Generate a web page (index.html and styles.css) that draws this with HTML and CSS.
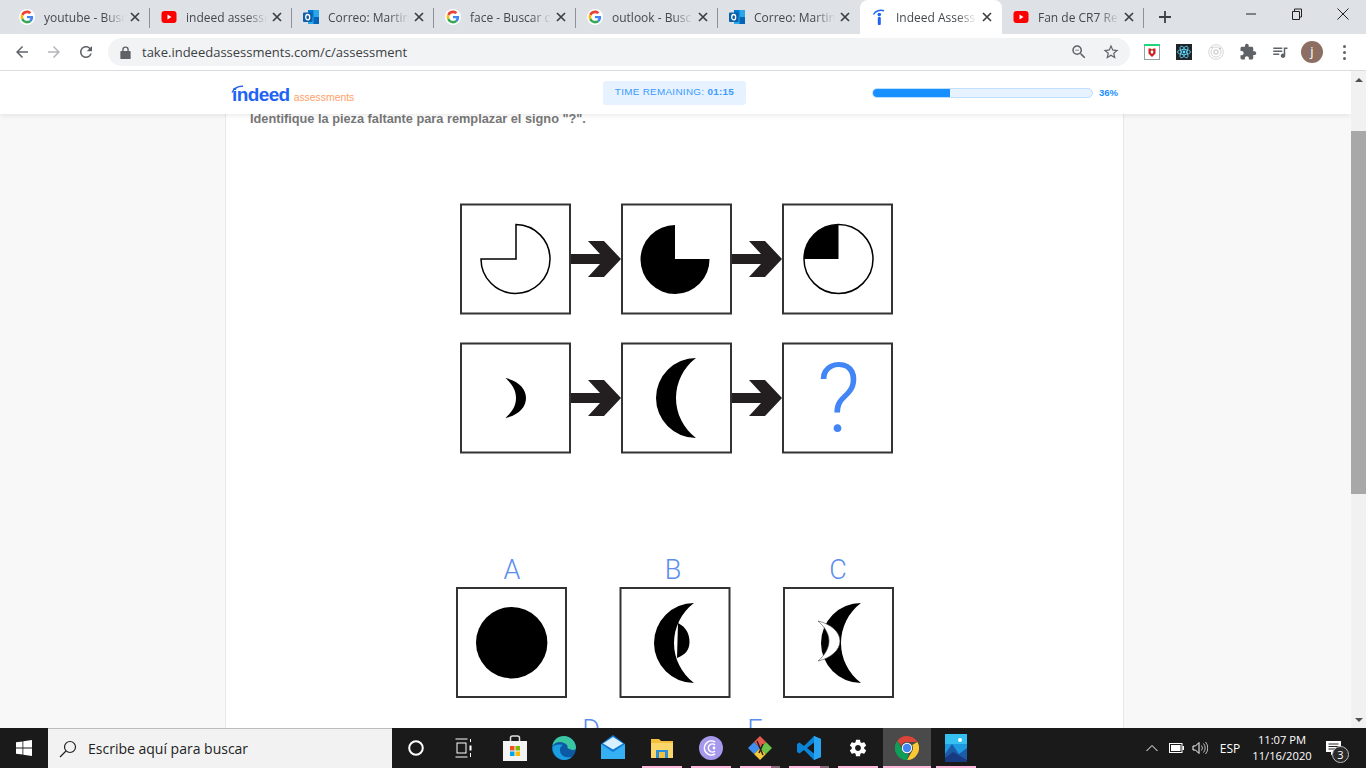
FILE: index.html
```html
<!DOCTYPE html>
<html>

	<head>
		<meta charset="UTF-8">
		<title>Indeed Assessments</title>
		<link rel="stylesheet" href="styles.css">
	</head>

	<body>
		<svg class="defs" width="0" height="0">
			<symbol id="google" viewBox="-6 -6 60 60">
				<circle cx="24" cy="24" r="30" fill="#fff"/>
				<path fill="#EA4335" d="M24 9.5c3.54 0 6.71 1.22 9.21 3.6l6.85-6.85C35.9 2.38 30.47 0 24 0 14.62 0 6.51 5.38 2.56 13.22l7.98 6.19C12.43 13.72 17.74 9.5 24 9.5z"/>
				<path fill="#4285F4" d="M46.98 24.55c0-1.57-.15-3.09-.38-4.55H24v9.02h12.94c-.58 2.96-2.26 5.48-4.78 7.18l7.73 6c4.51-4.18 7.09-10.36 7.09-17.65z"/>
				<path fill="#FBBC05" d="M10.53 28.59c-.48-1.45-.76-2.99-.76-4.59s.27-3.14.76-4.59l-7.98-6.19C.92 16.46 0 20.12 0 24c0 3.88.92 7.54 2.56 10.78l7.97-6.19z"/>
				<path fill="#34A853" d="M24 48c6.48 0 11.93-2.13 15.89-5.81l-7.73-6c-2.15 1.45-4.92 2.3-8.16 2.3-6.26 0-11.57-4.22-13.47-9.91l-7.98 6.19C6.51 42.62 14.62 48 24 48z"/>
			</symbol>
			<symbol id="youtube" viewBox="0 0 16 16">
				<rect x="0.5" y="2" width="15" height="12" rx="3" fill="#f00"/>
				<path d="M6.5 5.5v5l4-2.500z" fill="#fff"/>
			</symbol>
			<symbol id="outlook" viewBox="0 0 16 16">
				<rect x="5" y="1" width="11" height="14" fill="#28a8ea"/>
				<rect x="5" y="1" width="5.500" height="7" fill="#0078d4"/>
				<rect x="10.500" y="8" width="5.500" height="7" fill="#0364b8"/>
				<rect x="0" y="3.500" width="9.500" height="9.500" rx="1" fill="#0f5ea8"/>
				<ellipse cx="4.700" cy="8.200" rx="2" ry="2.700" fill="none" stroke="#fff" stroke-width="1.300"/>
			</symbol>
			<symbol id="indeed" viewBox="0 0 16 16">
				<path d="M2.500 5.500C4.500 1.800 9 .3 13 1.800" fill="none" stroke="#2164f3" stroke-width="1.500"/>
				<circle cx="8.300" cy="5.600" r="1.800" fill="#2164f3"/>
				<rect x="6.800" y="8" width="3" height="8" rx="1" fill="#2164f3"/>
			</symbol>
			<symbol id="close" viewBox="0 0 10 10">
				<path d="M1 1l8 8M9 1l-8 8" stroke="#3c4043" stroke-width="1.700" fill="none"/>
			</symbol>
		</svg>

		<div class="tabstrip">
			<div class="tab">
				<svg class="favicon"><use href="#google"/></svg>
				<span class="tab-title">youtube - Busc</span>
				<svg class="tab-close"><use href="#close"/></svg>
			</div>
			<div class="tab">
				<svg class="favicon"><use href="#youtube"/></svg>
				<span class="tab-title">indeed assessn</span>
				<svg class="tab-close"><use href="#close"/></svg>
			</div>
			<div class="tab">
				<svg class="favicon"><use href="#outlook"/></svg>
				<span class="tab-title">Correo: Martin</span>
				<svg class="tab-close"><use href="#close"/></svg>
			</div>
			<div class="tab">
				<svg class="favicon"><use href="#google"/></svg>
				<span class="tab-title">face - Buscar c</span>
				<svg class="tab-close"><use href="#close"/></svg>
			</div>
			<div class="tab">
				<svg class="favicon"><use href="#google"/></svg>
				<span class="tab-title">outlook - Busc</span>
				<svg class="tab-close"><use href="#close"/></svg>
			</div>
			<div class="tab no-line">
				<svg class="favicon"><use href="#outlook"/></svg>
				<span class="tab-title">Correo: Martin</span>
				<svg class="tab-close"><use href="#close"/></svg>
			</div>
			<div class="tab active">
				<svg class="favicon"><use href="#indeed"/></svg>
				<span class="tab-title">Indeed Assess</span>
				<svg class="tab-close"><use href="#close"/></svg>
			</div>
			<div class="tab">
				<svg class="favicon"><use href="#youtube"/></svg>
				<span class="tab-title">Fan de CR7 Re</span>
				<svg class="tab-close"><use href="#close"/></svg>
			</div>
			<svg class="new-tab" viewBox="0 0 12 12"><path d="M6 0v12M0 6h12" stroke="#3c4043" stroke-width="1.800"/></svg>
			<div class="window-controls">
				<div class="win-btn"><svg width="12" height="12" viewBox="0 0 12 12"><path d="M1 6h10" stroke="#222"/></svg></div>
				<div class="win-btn"><svg width="12" height="12" viewBox="0 0 12 12"><path d="M1.500 3.500h7v8h-7zM3.500 3.500v-2.500h7v8h-2" fill="none" stroke="#222"/></svg></div>
				<div class="win-btn"><svg width="12" height="12" viewBox="0 0 12 12"><path d="M.5.500l11 11M11.500.500l-11 11" stroke="#222"/></svg></div>
			</div>
		</div>

		<div class="toolbar">
			<div class="tool"><svg viewBox="0 0 24 24" class="ico"><path fill="#5f6368" d="M20 11H7.830l5.590-5.590L12 4l-8 8 8 8 1.410-1.410L7.830 13H20v-2z"/></svg></div>
			<div class="tool"><svg viewBox="0 0 24 24" class="ico"><path fill="#b4b6b9" d="M12 4l-1.410 1.410L16.170 11H4v2h12.170l-5.580 5.590L12 20l8-8z"/></svg></div>
			<div class="tool"><svg viewBox="0 0 24 24" class="ico"><path fill="#5f6368" d="M17.650 6.350C16.200 4.900 14.210 4 12 4c-4.420 0-7.990 3.580-7.990 8s3.570 8 7.990 8c3.730 0 6.840-2.550 7.730-6h-2.080c-.82 2.330-3.040 4-5.650 4-3.310 0-6-2.690-6-6s2.690-6 6-6c1.660 0 3.140.69 4.220 1.780L13 11h7V4l-2.350 2.350z"/></svg></div>
			<div class="omnibox">
				<svg viewBox="0 0 16 16" class="lock"><path fill="#5f6368" d="M3.500 6.500h1V5a3.500 3.500 0 0 1 7 0v1.500h1a1 1 0 0 1 1 1V14a1 1 0 0 1-1 1h-9a1 1 0 0 1-1-1V7.500a1 1 0 0 1 1-1zM6 6.500h4V5a2 2 0 0 0-4 0z"/></svg>
				<span class="url">take.indeedassessments.com/c/assessment</span>
				<div class="tool"><svg viewBox="0 0 24 24" class="ico"><path fill="#5f6368" d="M15.500 14h-.79l-.28-.27A6.471 6.471 0 0 0 16 9.500 6.500 6.500 0 1 0 9.500 16c1.610 0 3.090-.59 4.230-1.570l.27.28v.79l5 4.990L20.490 19l-4.990-5zm-6 0C7.010 14 5 11.990 5 9.500S7.010 5 9.500 5 14 7.010 14 9.500 11.990 14 9.500 14zM7 9h5v1H7z"/></svg></div>
				<div class="tool"><svg viewBox="0 0 24 24" class="ico"><path fill="#5f6368" d="M22 9.240l-7.190-.62L12 2 9.190 8.630 2 9.240l5.460 4.730L5.820 21 12 17.270 18.180 21l-1.630-7.030L22 9.240zM12 15.400l-3.760 2.270 1-4.280-3.320-2.880 4.380-.38L12 6.100l1.710 4.040 4.380.38-3.320 2.880 1 4.280L12 15.400z"/></svg></div>
			</div>
			<div class="extensions">
				<div class="tool">
					<svg viewBox="0 0 16 16" width="16" height="16">
						<rect x=".5" y=".5" width="15" height="15" fill="#fff" stroke="#9aa0a6"/>
						<rect width="16" height="2" fill="#1ed47c"/>
						<path d="M4.500 4.500h2l1.500 1 1.500-1h2v5L8 13 4.500 9.500z" fill="#c8201c"/>
						<rect x="6.800" y="6.500" width="2.400" height="3" fill="#fff"/>
					</svg>
				</div>
				<div class="tool">
					<svg viewBox="0 0 16 16" width="16" height="16">
						<rect width="16" height="16" fill="#20232a"/>
						<g fill="none" stroke="#61dafb" stroke-width=".8">
							<ellipse cx="8" cy="8" rx="6.500" ry="2.600"/>
							<ellipse cx="8" cy="8" rx="6.500" ry="2.600" transform="rotate(60 8 8)"/>
							<ellipse cx="8" cy="8" rx="6.500" ry="2.600" transform="rotate(120 8 8)"/>
						</g>
						<circle cx="8" cy="8" r="1.400" fill="#61dafb"/>
					</svg>
				</div>
				<div class="tool">
					<svg viewBox="0 0 16 16" width="16" height="16" fill="none" stroke="#d4d6d8">
						<circle cx="8" cy="8" r="7.300"/>
						<circle cx="8" cy="8" r="5"/>
						<circle cx="8" cy="8" r="2" stroke-width="1.600"/>
						<circle cx="12" cy="4.500" r="1" fill="#c0c2c4" stroke="none"/>
						<circle cx="4" cy="3.500" r=".8" fill="#c0c2c4" stroke="none"/>
					</svg>
				</div>
				<div class="tool"><svg viewBox="0 0 24 24" class="ico"><path fill="#5f6368" d="M20.500 11H19V7c0-1.100-.9-2-2-2h-4V3.500C13 2.120 11.880 1 10.500 1S8 2.120 8 3.500V5H4c-1.100 0-1.990.9-1.990 2v3.800H3.500c1.490 0 2.700 1.210 2.700 2.700s-1.210 2.700-2.700 2.700H2V20c0 1.100.9 2 2 2h3.800v-1.500c0-1.490 1.210-2.700 2.700-2.700 1.490 0 2.700 1.210 2.700 2.700V22H17c1.100 0 2-.9 2-2v-4h1.500c1.380 0 2.500-1.120 2.500-2.500S21.880 11 20.500 11z"/></svg></div>
				<div class="tool"><svg viewBox="0 0 24 24" class="ico"><path fill="#5f6368" d="M15 6H3v2h12V6zm0 4H3v2h12v-2zM3 16h8v-2H3v2zM17 6v8.180c-.31-.11-.65-.18-1-.18-1.660 0-3 1.340-3 3s1.340 3 3 3 3-1.340 3-3V8h3V6h-5z"/></svg></div>
				<div class="tool"><span class="avatar">j</span></div>
				<div class="tool"><span class="kebab"><i></i><i></i><i></i></span></div>
			</div>
		</div>

		<div class="viewport">
			<div class="page">
				<header class="site-header">
					<div class="logo">
						<svg class="logo-arc" width="14" height="9" viewBox="0 0 14 9"><path d="M1 7.500C3 3 7 1 12 1.200" fill="none" stroke="#2164f3" stroke-width="1.400"/></svg>
						<span class="logo-indeed">indeed</span>
						<span class="logo-sub">assessments</span>
					</div>
					<div class="timer">TIME REMAINING: <b>01:15</b></div>
					<div class="progress"><div class="progress-fill" style="width: 35%"></div></div>
					<span class="percent">36%</span>
				</header>
				<div class="card">
					<p class="question">Identifique la pieza faltante para remplazar el signo "?".</p>
					<svg class="puzzle" width="450" height="560" viewBox="450 195 450 560">
						<defs>
							<polygon id="arrow" points="571,254 600,254 588,241 604,241 621,259 604,277 588,277 600,264 571,264" fill="#231f20"/>
							<path id="moon" d="M696 358A40 40 0 0 0 696 438A50 50 0 0 1 696 358Z"/>
						</defs>

						<!-- primera fila -->
						<rect class="box" x="461" y="204.500" width="109" height="109"/>
						<rect class="box" x="622" y="204.500" width="109" height="109"/>
						<rect class="box" x="783" y="204.500" width="109" height="109"/>
						<use href="#arrow"/>
						<use href="#arrow" x="161"/>
						<path d="M516 259V224.500A34.500 34.500 0 1 1 481 259Z" fill="#fff" stroke="#000" stroke-width="1.500"/>
						<path d="M675 259V225A34.500 34.500 0 1 0 709.500 259Z"/>
						<circle cx="838.500" cy="259" r="34.500" fill="#fff" stroke="#000" stroke-width="1.500"/>
						<path d="M838.500 259V224.500A34.500 34.500 0 0 0 804 259Z"/>

						<!-- segunda fila -->
						<rect class="box" x="461" y="343.500" width="109" height="109"/>
						<rect class="box" x="622" y="343.500" width="109" height="109"/>
						<rect class="box" x="783" y="343.500" width="109" height="109"/>
						<use href="#arrow" y="139"/>
						<use href="#arrow" x="161" y="139"/>
						<path d="M505.500 378C519 381 526 389 526 398C526 407 519 415 505.500 418C512 412 516 406 516 398C516 390 512 384 505.500 378Z"/>
						<use href="#moon"/>
						<text class="mark" x="838.500" y="432">?</text>

						<!-- opciones -->
						<text class="letter" x="512" y="579">A</text>
						<text class="letter" x="673" y="579">B</text>
						<text class="letter" x="838" y="579">C</text>
						<rect class="box" x="457" y="588" width="109" height="109"/>
						<rect class="box" x="620.500" y="588" width="109" height="109"/>
						<rect class="box" x="784" y="588" width="109" height="109"/>
						<circle cx="511.700" cy="642.700" r="35.700"/>
						<use href="#moon" x="-2" y="245"/>
						<path d="M678 623C686 627 689.500 634 689.500 642C689.500 650 685 655 677 658Z"/>
						<use href="#moon" x="165" y="245"/>
						<path d="M818 621C831 624 840 632 840 641C840 650 831 658 818 661C825 655 829 648 829 641C829 634 825 627 818 621Z" fill="#fff" stroke="#444" stroke-width=".6"/>
						<text class="letter" x="591" y="739">D</text>
						<text class="letter" x="755" y="739">E</text>
					</svg>
				</div>
			</div>
			<div class="scrollbar">
				<div class="sb-btn"><span class="tri-up"></span></div>
				<div class="sb-thumb"></div>
				<div class="sb-btn sb-end"><span class="tri-down"></span></div>
			</div>
		</div>

		<div class="taskbar">
			<div class="start">
				<svg width="16" height="16" viewBox="0 0 16 16"><path fill="#fff" d="M0 2.300l6.500-.9v6.200H0zM7.300 1.300L16 0v7.600H7.300zM0 8.400h6.500v6.200L0 13.700zM7.300 8.400H16V16l-8.700-1.300z"/></svg>
			</div>
			<div class="search">
				<svg width="18" height="18" viewBox="0 0 18 18"><circle cx="11" cy="7" r="5.500" fill="none" stroke="#222" stroke-width="1.200"/><path d="M7 11l-6 6" stroke="#222" stroke-width="1.200"/></svg>
				<span>Escribe aquí para buscar</span>
			</div>
			<div class="task">
				<svg width="20" height="20" viewBox="0 0 20 20"><circle cx="10" cy="10" r="6.800" fill="none" stroke="#fff" stroke-width="2"/></svg>
			</div>
			<div class="task task-view">
				<svg width="18" height="20" viewBox="0 0 18 20" fill="none" stroke="#fff"><path d="M.5 1h12M.5 19h12"/><rect x="2" y="5" width="9" height="10"/><path d="M15.500 1v3M15.500 15v4"/><rect x="14.500" y="7.500" width="2" height="5" fill="#fff" stroke="none"/></svg>
			</div>
			<div class="task">
				<svg width="24" height="26" viewBox="0 0 24 26">
					<path d="M7.500 6V3a2 2 0 0 1 2-2h5a2 2 0 0 1 2 2v3" fill="none" stroke="#ddd" stroke-width="1.500"/>
					<rect y="6" width="24" height="20" fill="#f4f4f4"/>
					<rect x="7" y="11" width="4.500" height="4.500" fill="#f25022"/>
					<rect x="12.500" y="11" width="4.500" height="4.500" fill="#7fba00"/>
					<rect x="7" y="16.500" width="4.500" height="4.500" fill="#00a4ef"/>
					<rect x="12.500" y="16.500" width="4.500" height="4.500" fill="#ffb900"/>
				</svg>
			</div>
			<div class="task">
				<svg width="24" height="26" viewBox="0 0 24 26">
					<circle cx="12" cy="13" r="12" fill="#0c59a4"/>
					<path d="M24 13C24 6 18 1 12 1C6 1 1 5 .5 11C3 7 8 6 12 8C15 9 16 11 15.500 13C18 15 24 16 24 13Z" fill="#39c6a0"/>
					<path d="M.5 12C0 20 7 25 12 25C15 25 18 24 20 22C15 23 9 22 8 16C7.500 13 9 11 11 10C6 9 2 10 .5 12Z" fill="#1b9de2"/>
				</svg>
			</div>
			<div class="task">
				<svg width="24" height="26" viewBox="0 0 24 26">
					<path d="M0 9L12 0l12 9v15H0z" fill="#0f78d4"/>
					<path d="M0 9l12 8 12-8v15H0z" fill="#35b0f2"/>
					<path d="M2 8.500L12 2l10 6.500-10 6z" fill="#d8f0ff"/>
				</svg>
			</div>
			<div class="task underlined">
				<svg width="22" height="22" viewBox="0 0 22 22">
					<path d="M0 2h8l2 2h12v16H0z" fill="#f3c13e"/>
					<rect y="6" width="22" height="15" fill="#fbd66a"/>
					<rect x="5" y="13" width="12" height="8" fill="#2a8fd8"/>
					<rect x="8" y="15" width="6" height="6" fill="#f3c13e"/>
				</svg>
			</div>
			<div class="task underlined">
				<svg width="24" height="24" viewBox="0 0 24 24" fill="none">
					<circle cx="12" cy="12" r="12" fill="#a699ed"/>
					<path d="M16 6a7 7 0 1 0 0 12M16 9a4 4 0 1 0 0 6" stroke="#fff" stroke-width="1.500"/>
					<circle cx="15" cy="12" r="1.400" fill="#fff"/>
				</svg>
			</div>
			<div class="task underlined stacked">
				<svg width="24" height="24" viewBox="0 0 24 24">
					<path d="M0 12L6 6l6 6-6 6z" fill="#3e8ff0"/>
					<path d="M12 12l6-6 6 6-6 6z" fill="#6ac24b"/>
					<path d="M6 18l6-6 6 6-6 6z" fill="#f4c83d"/>
					<path d="M6 6l6-6 6 6-6 6z" fill="#e35b4f"/>
					<path d="M9 5l6 14M15 8l-4 9" stroke="#222" stroke-width="1.500"/>
				</svg>
			</div>
			<div class="task underlined stacked">
				<svg width="24" height="24" viewBox="0 0 24 24">
					<path d="M17 0L7 10 2.500 6.500 0 8v8l2.500 1.500L7 14l10 10 7-3V3z" fill="#0a84d6"/>
					<path d="M17 6.500L10 12l7 5.500z" fill="#1a1a1a"/>
					<path d="M17 0l7 3v18l-7 3z" fill="#2aa4f0"/>
				</svg>
			</div>
			<div class="task underlined">
				<svg width="20" height="20" viewBox="0 0 24 24"><path fill="#fff" d="M19.430 12.980c.04-.32.070-.64.070-.98s-.03-.66-.07-.98l2.110-1.650c.19-.15.240-.42.120-.64l-2-3.460c-.12-.22-.39-.3-.61-.22l-2.490 1c-.52-.4-1.080-.73-1.690-.98l-.38-2.650A.488.488 0 0 0 14 2h-4c-.25 0-.46.18-.49.420l-.38 2.650c-.61.25-1.170.59-1.690.98l-2.490-1c-.23-.09-.49 0-.61.22l-2 3.460c-.13.22-.07.49.12.64l2.110 1.650c-.04.32-.07.65-.07.98s.03.66.07.98l-2.110 1.650c-.19.15-.24.42-.12.64l2 3.460c.12.22.39.3.61.22l2.490-1c.52.4 1.080.73 1.690.98l.38 2.650c.03.24.24.42.49.42h4c.25 0 .46-.18.49-.42l.38-2.650c.61-.25 1.170-.59 1.690-.98l2.490 1c.23.09.49 0 .61-.22l2-3.460c.12-.22.07-.49-.12-.64l-2.110-1.650zM12 15.500c-1.930 0-3.500-1.570-3.500-3.500s1.570-3.500 3.500-3.500 3.500 1.570 3.500 3.500-1.570 3.500-3.500 3.500z"/></svg>
			</div>
			<div class="task task-active underlined">
				<svg width="24" height="24" viewBox="0 0 24 24">
					<path d="M12 0a12 12 0 0 1 10.400 6H12a6 6 0 0 0-5.700 4L2.300 4.700A12 12 0 0 1 12 0z" fill="#db4437"/>
					<path d="M22.400 6A12 12 0 0 1 12 24l5-8.700A6 6 0 0 0 17.200 9z" fill="#fcc934"/>
					<path d="M12 24A12 12 0 0 1 2.300 4.700l4.800 8.600a6 6 0 0 0 6.500 4.500z" fill="#0f9d58"/>
					<circle cx="12" cy="12" r="5.200" fill="#fff"/>
					<circle cx="12" cy="12" r="4.200" fill="#4285f4"/>
				</svg>
			</div>
			<div class="task underlined">
				<svg width="22" height="28" viewBox="0 0 22 28">
					<rect width="22" height="28" fill="#1e9be0"/>
					<rect y="0" width="22" height="10" fill="#35c0f2"/>
					<circle cx="15" cy="6" r="2" fill="#fff"/>
					<path d="M0 20l7-10 7 10 8-6v14H0z" fill="#1c5ba8"/>
					<path d="M0 24l8-6 14 8v2H0z" fill="#173a80"/>
				</svg>
			</div>

			<div class="tray">
				<div class="tray-item wide-24"><svg width="12" height="8" viewBox="0 0 12 8"><path d="M.5 7L6 1.500 11.500 7" fill="none" stroke="#fff"/></svg></div>
				<div class="tray-item wide-24"><svg width="15" height="10" viewBox="0 0 15 10"><rect x=".5" y=".5" width="12.500" height="9" fill="none" stroke="#fff"/><rect x="2" y="2" width="9.500" height="6" fill="#fff"/><rect x="13.500" y="3" width="1.500" height="4" fill="#fff"/></svg></div>
				<div class="tray-item wide-23"><svg width="16" height="14" viewBox="0 0 16 14" fill="none" stroke="#fff"><path d="M1 5h2.500L7 1.500v11L3.500 9H1z"/><path d="M9.500 4.500a4 4 0 0 1 0 5M11.500 2.500a7 7 0 0 1 0 9M13.500 1a9 9 0 0 1 0 12" stroke="#bbb"/></svg></div>
				<div class="tray-item wide-38 tray-text">ESP</div>
				<div class="clock">
					<span>11:07 PM</span>
					<span>11/16/2020</span>
				</div>
				<div class="notify">
					<svg width="15" height="15" viewBox="0 0 15 15"><path d="M0 0h15v11H8l-3 3.500V11H0z" fill="#fff"/><path d="M2.500 3h10M2.500 5.500h10M2.500 8h7" stroke="#222"/></svg>
					<span class="badge">3</span>
				</div>
			</div>
		</div>
	</body>

</html>
```

FILE: styles.css
```css
* {
	box-sizing: border-box;
}

html,
body {
	margin: 0;
	height: 100%;
	overflow: hidden;
}

body {
	display: flex;
	flex-direction: column;
	font-family: "Open Sans", "Liberation Sans", sans-serif;
	background-color: #fff;
}

.defs {
	position: absolute;
}

/* chrome */
.tabstrip {
	height: 34px;
	flex: none;
	display: flex;
	align-items: stretch;
	padding-left: 8px;
	background-color: #dee1e6;
}

.tab {
	width: 142px;
	height: 34px;
	display: flex;
	align-items: center;
	padding: 0 10px 0 11px;
	position: relative;
	font-size: 12px;
	color: #45494e;
}

.tab::after {
	content: "";
	position: absolute;
	right: 0;
	top: 8px;
	height: 20px;
	width: 1px;
	background-color: #8e9196;
}

.tab.no-line::after,
.tab.active::after {
	display: none;
}

.tab.active {
	background-color: #fff;
	border-radius: 8px 8px 0 0;
}

.favicon {
	width: 16px;
	height: 16px;
	flex: none;
	margin-right: 9px;
}

.tab-title {
	width: 81px;
	flex: none;
	white-space: nowrap;
	-webkit-mask-image: linear-gradient(to right, #000 75%, transparent);
	mask-image: linear-gradient(to right, #000 75%, transparent);
}

.tab-close {
	width: 10px;
	height: 10px;
	flex: none;
	margin-left: 5px;
}

.new-tab {
	width: 12px;
	height: 12px;
	margin: 11px 0 0 15px;
	flex: none;
}

.window-controls {
	display: flex;
	margin-left: auto;
}

.win-btn {
	width: 46px;
	height: 28px;
	display: flex;
	align-items: center;
	justify-content: center;
}

.toolbar {
	height: 37px;
	flex: none;
	display: flex;
	align-items: center;
	padding: 0 6px;
	background-color: #fff;
	border-bottom: 1px solid #dadce0;
}

.tool {
	width: 32px;
	height: 28px;
	flex: none;
	display: flex;
	align-items: center;
	justify-content: center;
}

.ico {
	width: 18px;
	height: 18px;
}

.omnibox {
	width: 1022px;
	height: 28px;
	margin-left: 6px;
	padding: 0 3px 0 10px;
	display: flex;
	align-items: center;
	border-radius: 14px;
	background-color: #f1f3f4;
}

.lock {
	width: 15px;
	height: 15px;
	flex: none;
}

.url {
	margin-left: 9px;
	flex: 1;
	font-size: 13px;
	color: #3c4043;
}

.extensions {
	display: flex;
	margin-left: 6px;
}

.avatar {
	width: 22px;
	height: 22px;
	border-radius: 50%;
	background-color: #8d6e63;
	color: #fff;
	font-size: 13px;
	line-height: 21px;
	text-align: center;
}

.kebab {
	display: flex;
	flex-direction: column;
	gap: 3px;
}

.kebab i {
	width: 3px;
	height: 3px;
	border-radius: 50%;
	background-color: #5f6368;
}

/* page */
.viewport {
	flex: 1;
	min-height: 0;
	display: flex;
}

.page {
	width: 1351px;
	position: relative;
	overflow: hidden;
	background-color: #f8f8f8;
}

.site-header {
	position: absolute;
	left: 0;
	top: 0;
	z-index: 2;
	width: 100%;
	height: 43px;
	padding-left: 232px;
	display: flex;
	align-items: center;
	background-color: #fff;
	box-shadow: 0 1px 6px rgba(0, 0, 0, .1);
	font-family: "Liberation Sans", sans-serif;
}

.logo {
	width: 371px;
	position: relative;
	display: flex;
	align-items: baseline;
	padding-top: 4px;
}

.logo-arc {
	position: absolute;
	left: -1px;
	top: 5px;
}

.logo-indeed {
	font-size: 19px;
	font-weight: bold;
	letter-spacing: -0.6px;
	color: #2164f3;
}

.logo-sub {
	margin-left: 4px;
	font-size: 10.400px;
	color: #ffa168;
}

.timer {
	width: 143px;
	height: 24px;
	line-height: 22px;
	text-align: center;
	font-size: 9.900px;
	letter-spacing: .3px;
	color: #3a9bff;
	background-color: #e6f2ff;
	border-radius: 3px;
}

.progress {
	width: 221px;
	height: 10px;
	margin-left: 126px;
	background-color: #e6f2ff;
	border: 1px solid #bfdfff;
	border-radius: 5px;
	overflow: hidden;
}

.progress-fill {
	height: 100%;
	background-color: #1890ff;
}

.percent {
	margin-left: 6px;
	font-size: 9.500px;
	font-weight: bold;
	color: #1890ff;
}

.card {
	width: 899px;
	height: 800px;
	margin-left: 225px;
	padding-top: 39px;
	background-color: #fff;
	border-left: 1px solid #e8e8e8;
	border-right: 1px solid #e8e8e8;
}

.question {
	margin: 0 0 67px 24px;
	font-family: "Liberation Sans", sans-serif;
	font-size: 12.750px;
	line-height: 18px;
	font-weight: bold;
	color: #777;
}

.puzzle {
	display: block;
	margin-left: 224px;
}

.box {
	fill: #fff;
	stroke: #333;
	stroke-width: 2;
}

.mark {
	font-family: "Roboto", sans-serif;
	font-weight: 300;
	font-size: 96px;
	fill: #4285f4;
	text-anchor: middle;
}

.letter {
	font-family: "Roboto", sans-serif;
	font-weight: 300;
	font-size: 27px;
	fill: #5b8def;
	text-anchor: middle;
}

.scrollbar {
	width: 15px;
	display: flex;
	flex-direction: column;
	background-color: #f1f1f1;
}

.sb-btn {
	height: 17px;
	flex: none;
	display: flex;
	align-items: center;
	justify-content: center;
}

.sb-end {
	margin-top: auto;
}

.tri-up {
	border: 4px solid transparent;
	border-top: 0;
	border-bottom: 4px solid #505050;
}

.tri-down {
	border: 4px solid transparent;
	border-bottom: 0;
	border-top: 4px solid #505050;
}

.sb-thumb {
	height: 363px;
	margin-top: 43px;
	background-color: #a8a8a8;
}

/* taskbar */
.taskbar {
	height: 40px;
	flex: none;
	display: flex;
	background-color: #1a1a1a;
}

.start {
	width: 48px;
	display: flex;
	align-items: center;
	justify-content: center;
}

.search {
	width: 344px;
	display: flex;
	align-items: center;
	gap: 11px;
	padding-left: 11px;
	background-color: #f2f2f2;
	border-top: 1px solid #bdbdbd;
	font-size: 14px;
	color: #222;
}

.task {
	width: 48px;
	height: 40px;
	flex: none;
	display: flex;
	align-items: center;
	justify-content: center;
	position: relative;
}

.task:nth-of-type(n+5) {
	margin-right: 1px;
}

.task:nth-of-type(5) {
	margin-left: 3px;
}

.task.underlined::after {
	content: "";
	position: absolute;
	left: 4px;
	right: 4px;
	bottom: 0;
	height: 2px;
	background-color: #ffb8dc;
}

.task.stacked::after {
	background: linear-gradient(to right, #ffb8dc 78%, #8c6a7c 78%);
}

.task-active {
	background-color: #4a4a4a;
}

.task-active.underlined::after {
	left: 0;
	right: 0;
}

.tray {
	margin-left: auto;
	padding-right: 19px;
	display: flex;
	align-items: center;
	color: #fff;
}

.tray-item {
	display: flex;
	align-items: center;
	justify-content: center;
}

.wide-24 {
	width: 24px;
}

.wide-23 {
	width: 23px;
}

.wide-38 {
	width: 38px;
}

.tray-text {
	font-size: 12px;
}

.clock {
	width: 66px;
	margin-right: 4px;
	display: flex;
	flex-direction: column;
	align-items: center;
	font-size: 11.200px;
	line-height: 16px;
}

.notify {
	width: 28px;
	height: 40px;
	position: relative;
	display: flex;
	align-items: center;
	justify-content: center;
}

.badge {
	position: absolute;
	left: 13px;
	top: 18px;
	width: 17px;
	height: 17px;
	border-radius: 50%;
	border: 1px solid #bbb;
	background-color: #2b2b2b;
	font-size: 11px;
	line-height: 15px;
	text-align: center;
}
```
